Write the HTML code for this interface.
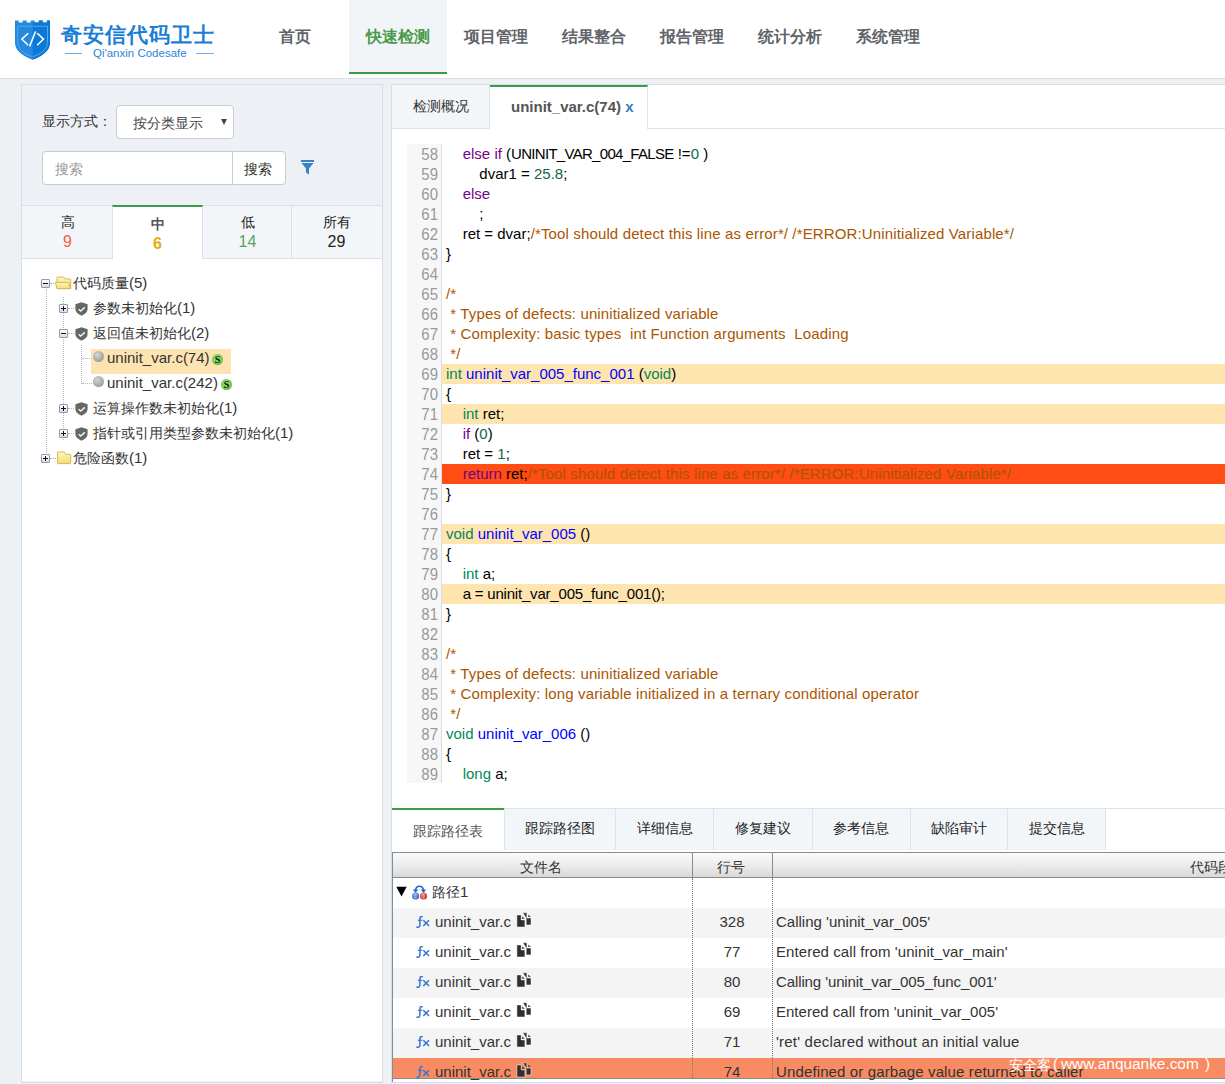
<!DOCTYPE html>
<html><head><meta charset="utf-8">
<style>
*{margin:0;padding:0;box-sizing:border-box}
html,body{width:1225px;height:1084px;overflow:hidden;background:#edf1f4;font-family:"Liberation Sans",sans-serif;color:#333}
.abs{position:absolute}
#hdr{position:absolute;left:0;top:0;width:1225px;height:79px;background:#fff;border-bottom:1px solid #d8dee5}
.nav{position:absolute;top:0;height:74px;font-size:16px;line-height:74px;color:#5f646a;white-space:nowrap;font-weight:bold}
.nav.act{background:#f1f5f8;color:#4a9a4a;border-bottom:2px solid #3d9a47;height:74px}
#left{position:absolute;left:21px;top:84px;width:362px;height:999px;border:1px solid #d6dee7;background:#edf1f5}
#right{position:absolute;left:391px;top:84px;width:834px;height:999px;border:1px solid #d6dee7;border-right:none;background:#fff}
.sev{position:absolute;width:91px;text-align:center;font-size:14px;line-height:19px;color:#1a1a1a}
.sev span{font-size:16px}
.tb{position:absolute;width:9px;height:9px;border:1px solid #8c9cb4;background:linear-gradient(#fff,#dcdcdc);border-radius:1px}
.tb .h{position:absolute;left:1px;top:3px;width:5px;height:1px;background:#111}
.tb .v{position:absolute;left:3px;top:1px;width:1px;height:5px;background:#111}
.dv{position:absolute;width:1px;border-left:1px dotted #b4b4b4}
.dh{position:absolute;height:1px;border-top:1px dotted #b4b4b4}
.gc{position:absolute;width:11px;height:11px;border-radius:50%;background:radial-gradient(circle at 40% 35%,#d4d4d4,#999 80%)}
.si{position:absolute;width:11px;height:11px;border-radius:50%;background:radial-gradient(circle at 45% 40%,#a6e88a,#62c23e 70%,#3f9e2a 100%);font:bold 10px/11px "Liberation Serif",serif;color:#111;text-align:center}
.tt{position:absolute;font-size:14px;line-height:18px;color:#333;white-space:nowrap}
.tt .e{font-size:15px}
.lnum{position:absolute;width:31px;text-align:right;font-size:15px;line-height:20px;color:#999;transform:translateY(0.6px) scaleY(1.1);transform-origin:50% 60%}
.code{position:absolute;font-size:15px;line-height:20px;color:#000;white-space:pre}
.code b{font-weight:normal}
.c{letter-spacing:0.14px}.k{color:#770088}.t{color:#008855}.f{color:#0000ff}.n{color:#116644}.c{color:#aa5500}
.rt{position:absolute;font-size:15px;line-height:18px;color:#333;white-space:nowrap}
.fx{position:absolute;font:italic 14px/18px "Liberation Serif",serif;color:#3f6fc9;white-space:nowrap}
.wm{position:absolute;line-height:18px;color:#fff;white-space:nowrap}
</style></head><body>
<div id="hdr">
<svg class="abs" style="left:15px;top:20px" width="36" height="41" viewBox="0 0 36 41">
<path d="M0 0.5 H3.6 V2.6 H7.7 V0.5 H11.6 V2.6 H15.8 V0.5 H19.7 V2.6 H23.8 V0.5 H27.8 V2.6 H31.9 V0.5 H35 V22.7 Q35 33 17.5 39.8 Q0 33 0 22.7 Z" fill="#238ae0"/>
<path d="M17.8 2.6 H23.8 V0.5 H27.8 V2.6 H31.9 V0.5 H35 V22.7 Q35 33 17.8 39.7 Z" fill="#0b79d8"/>
<path d="M2.7 6.2 H32.5 V22.5 Q32.5 31.5 17.5 37 Q2.7 31.5 2.7 22.5 Z" fill="none" stroke="#5aa6ea" stroke-width="1"/>
<path d="M13.2 13.2 L6.8 19.1 L13.2 25.2 M22.2 13.2 L28.5 19.1 L22.2 25.2 M20.6 11.4 L14.6 26.4" fill="none" stroke="#fff" stroke-width="1.5"/>
</svg>
<div class="abs" style="left:61px;top:21px;font-size:21px;line-height:28px;font-weight:bold;color:#1b7ed6;letter-spacing:1px;white-space:nowrap">奇安信代码卫士</div>
<div class="abs" style="left:65px;top:53px;width:17px;height:1px;background:#6aaee8"></div>
<div class="abs" style="left:196px;top:53px;width:18px;height:1px;background:#6aaee8"></div>
<div class="abs" style="left:93px;top:46px;font-size:11.5px;line-height:14px;color:#2a86d8;white-space:nowrap">Qi'anxin Codesafe</div>
<div class="nav" style="left:279px">首页</div>
<div class="nav act" style="left:349px;width:98px;padding-left:17px">快速检测</div>
<div class="nav" style="left:464px">项目管理</div>
<div class="nav" style="left:562px">结果整合</div>
<div class="nav" style="left:660px">报告管理</div>
<div class="nav" style="left:758px">统计分析</div>
<div class="nav" style="left:856px">系统管理</div>
</div>
<div id="left">
<div class="abs" style="left:20px;top:28px;font-size:14px;line-height:16px;color:#333;white-space:nowrap">显示方式：</div>
<div class="abs" style="left:94px;top:20px;width:118px;height:34px;background:#fff;border:1px solid #c8ccd0;border-radius:4px"></div>
<div class="abs" style="left:111px;top:30px;font-size:14px;line-height:16px;color:#444;white-space:nowrap">按分类显示</div>
<div class="abs" style="left:199px;top:34px;width:0;height:0;border-left:3.5px solid transparent;border-right:3.5px solid transparent;border-top:6px solid #444"></div>
<div class="abs" style="left:20px;top:66px;width:191px;height:34px;background:#fff;border:1px solid #c8ccd0;border-radius:4px 0 0 4px"></div>
<div class="abs" style="left:33px;top:76px;font-size:14px;line-height:16px;color:#999;white-space:nowrap">搜索</div>
<div class="abs" style="left:210px;top:66px;width:54px;height:34px;background:#fff;border:1px solid #c8ccd0;border-radius:0 4px 4px 0"></div>
<div class="abs" style="left:222px;top:76px;font-size:14px;line-height:16px;color:#333;white-space:nowrap">搜索</div>
<svg class="abs" style="left:279px;top:75px" width="13" height="15" viewBox="0 0 13 15"><path d="M0 0 H13 V2 H0 Z M0.5 3 H12.5 L8 8.5 V14.5 L5 12.5 V8.5 Z" fill="#3b80c3"/></svg>
<div class="abs" style="left:0;top:120px;width:360px;height:54px;background:#f2f6f9;border-top:1px solid #d9e1e9;border-bottom:1px solid #d9e1e9"></div>
<div class="abs" style="left:90px;top:120px;width:1px;height:54px;background:#dbe3ea"></div>
<div class="abs" style="left:180px;top:120px;width:1px;height:54px;background:#dbe3ea"></div>
<div class="abs" style="left:269px;top:120px;width:1px;height:54px;background:#dbe3ea"></div>
<div class="abs" style="left:90px;top:120px;width:91px;height:55px;background:#fff;border-top:2px solid #3e9a48;border-left:1px solid #dbe3ea;border-right:1px solid #dbe3ea"></div>
<div class="abs" style="left:0;top:174px;width:360px;height:822px;background:#fff"></div>
<div class="abs" style="left:69px;top:264px;width:140px;height:25px;background:#fde3b2"></div>
<div class="dv" style="left:24px;top:204px;height:166px"></div>
<div class="dv" style="left:41px;top:212px;height:143px"></div>
<div class="dv" style="left:59px;top:260px;height:39px"></div>
<div class="dh" style="left:28px;top:198px;width:6px"></div>
<div class="dh" style="left:28px;top:373px;width:6px"></div>
<div class="dh" style="left:46px;top:223px;width:6px"></div>
<div class="dh" style="left:46px;top:248px;width:6px"></div>
<div class="dh" style="left:46px;top:323px;width:6px"></div>
<div class="dh" style="left:46px;top:348px;width:6px"></div>
<div class="dh" style="left:60px;top:273px;width:10px"></div>
<div class="dh" style="left:60px;top:298px;width:10px"></div>
<div class="tb" style="left:19px;top:194px"><i class="h"></i></div>
<div class="tb" style="left:37px;top:219px"><i class="h"></i><i class="v"></i></div>
<div class="tb" style="left:37px;top:244px"><i class="h"></i></div>
<div class="tb" style="left:37px;top:319px"><i class="h"></i><i class="v"></i></div>
<div class="tb" style="left:37px;top:344px"><i class="h"></i><i class="v"></i></div>
<div class="tb" style="left:19px;top:369px"><i class="h"></i><i class="v"></i></div>
<svg class="abs" style="left:33px;top:191px" width="17" height="14" viewBox="0 0 17 14"><defs><linearGradient id="fy" x1="0" y1="0" x2="0" y2="1"><stop offset="0" stop-color="#fdf8b8"/><stop offset="1" stop-color="#f2dc78"/></linearGradient></defs><path d="M2 12.6 V1.6 Q2 1 2.6 1 H8.6 L10.3 3 H15.1 Q15.7 3 15.7 3.6 V12.6 Z" fill="url(#fy)" stroke="#dcb654" stroke-width="1"/><path d="M0.3 6.4 H13.3 L15.7 12.6 H2.1 Z" fill="url(#fy)" stroke="#dcb654" stroke-width="1" stroke-linejoin="round"/></svg>
<svg class="abs" style="left:33px;top:366px" width="17" height="14" viewBox="0 0 17 14"><path d="M2.5 1.6 Q2.5 1 3.1 1 H9.1 L10.8 3.3 H15.1 Q15.7 3.3 15.7 3.9 V12 Q15.7 12.6 15.1 12.6 H3.1 Q2.5 12.6 2.5 12 Z" fill="url(#fy)" stroke="#dcb654" stroke-width="1"/></svg>
<svg class="abs" style="left:53px;top:217px" width="13" height="14" viewBox="0 0 13 14"><path d="M6.5 0.3 L12.6 2.2 V7 Q12.6 11 6.5 13.7 Q0.4 11 0.4 7 V2.2 Z" fill="#666"/><path d="M3.6 7.2 L5.7 9 L9.8 5.4" fill="none" stroke="#f4f4f4" stroke-width="1.4"/></svg>
<svg class="abs" style="left:53px;top:242px" width="13" height="14" viewBox="0 0 13 14"><path d="M6.5 0.3 L12.6 2.2 V7 Q12.6 11 6.5 13.7 Q0.4 11 0.4 7 V2.2 Z" fill="#666"/><path d="M3.6 7.2 L5.7 9 L9.8 5.4" fill="none" stroke="#f4f4f4" stroke-width="1.4"/></svg>
<svg class="abs" style="left:53px;top:317px" width="13" height="14" viewBox="0 0 13 14"><path d="M6.5 0.3 L12.6 2.2 V7 Q12.6 11 6.5 13.7 Q0.4 11 0.4 7 V2.2 Z" fill="#666"/><path d="M3.6 7.2 L5.7 9 L9.8 5.4" fill="none" stroke="#f4f4f4" stroke-width="1.4"/></svg>
<svg class="abs" style="left:53px;top:342px" width="13" height="14" viewBox="0 0 13 14"><path d="M6.5 0.3 L12.6 2.2 V7 Q12.6 11 6.5 13.7 Q0.4 11 0.4 7 V2.2 Z" fill="#666"/><path d="M3.6 7.2 L5.7 9 L9.8 5.4" fill="none" stroke="#f4f4f4" stroke-width="1.4"/></svg>
<div class="gc" style="left:71px;top:266px"></div>
<div class="gc" style="left:71px;top:291px"></div>
<div class="si" style="left:190px;top:269px">S</div>
<div class="si" style="left:199px;top:294px">S</div>
<div class="tt" style="left:51px;top:189px">代码质量<span class="e">(5)</span></div>
<div class="tt" style="left:71px;top:214px">参数未初始化<span class="e">(1)</span></div>
<div class="tt" style="left:71px;top:239px">返回值未初始化<span class="e">(2)</span></div>
<div class="tt" style="left:85px;top:264px"><span class="e">uninit_var.c(74)</span></div>
<div class="tt" style="left:85px;top:289px"><span class="e">uninit_var.c(242)</span></div>
<div class="tt" style="left:71px;top:314px">运算操作数未初始化<span class="e">(1)</span></div>
<div class="tt" style="left:71px;top:339px">指针或引用类型参数未初始化<span class="e">(1)</span></div>
<div class="tt" style="left:51px;top:364px">危险函数<span class="e">(1)</span></div>
<div class="sev" style="left:0;top:128px">高<br><span style="color:#f2643a">9</span></div>
<div class="sev" style="left:90px;top:130px;color:#555;font-weight:bold">中<br><span style="color:#e9a81b;font-weight:bold">6</span></div>
<div class="sev" style="left:180px;top:128px">低<br><span style="color:#5da05a">14</span></div>
<div class="sev" style="left:269px;top:128px">所有<br><span style="color:#222">29</span></div>
</div>
<div id="right">
<div class="abs" style="left:0px;top:0px;width:833px;height:44px;border-bottom:1px solid #dde3e9"></div>
<div class="abs" style="left:0px;top:0px;width:98px;height:43px;background:#f2f6f9;border-right:1px solid #dde3e9"></div>
<div class="abs" style="left:98px;top:0px;width:158px;height:44px;background:#fff;border-top:2px solid #3e9a48;border-right:1px solid #dde3e9"></div>
<div class="abs" style="left:21px;top:12px;font-size:14px;line-height:18px;color:#333;white-space:nowrap">检测概况</div>
<div class="abs" style="left:119px;top:13px;font-size:15px;line-height:18px;font-weight:bold;color:#555;white-space:nowrap">uninit_var.c(74) <span style="color:#3a7cbf">x</span></div>
<div class="abs" style="left:15px;top:59px;width:35px;height:639px;background:#f7f7f7;border-right:1px solid #dcdcdc"></div>
<div class="lnum" style="left:15px;top:59px">58</div>
<div class="code" style="left:54px;top:59px">    <b class="k">else</b> <b class="k">if</b> (<b style="letter-spacing:-0.7px">UNINIT_VAR_004_FALSE</b> !=<b class="n">0</b> )</div>
<div class="lnum" style="left:15px;top:79px">59</div>
<div class="code" style="left:54px;top:79px">        dvar1 = <b class="n">25.8</b>;</div>
<div class="lnum" style="left:15px;top:99px">60</div>
<div class="code" style="left:54px;top:99px">    <b class="k">else</b></div>
<div class="lnum" style="left:15px;top:119px">61</div>
<div class="code" style="left:54px;top:119px">        ;</div>
<div class="lnum" style="left:15px;top:139px">62</div>
<div class="code" style="left:54px;top:139px">    ret = dvar;<b class="c">/*Tool should detect this line as error*/</b> <b class="c">/*ERROR:Uninitialized Variable*/</b></div>
<div class="lnum" style="left:15px;top:159px">63</div>
<div class="code" style="left:54px;top:159px">}</div>
<div class="lnum" style="left:15px;top:179px">64</div>
<div class="code" style="left:54px;top:179px"></div>
<div class="lnum" style="left:15px;top:199px">65</div>
<div class="code" style="left:54px;top:199px"><b class="c">/*</b></div>
<div class="lnum" style="left:15px;top:219px">66</div>
<div class="code" style="left:54px;top:219px"><b class="c"> * Types of defects: uninitialized variable</b></div>
<div class="lnum" style="left:15px;top:239px">67</div>
<div class="code" style="left:54px;top:239px"><b class="c"> * Complexity: basic types  int Function arguments  Loading</b></div>
<div class="lnum" style="left:15px;top:259px">68</div>
<div class="code" style="left:54px;top:259px"><b class="c"> */</b></div>
<div class="abs" style="left:50px;top:279px;width:783px;height:20px;background:#fee5b0"></div>
<div class="lnum" style="left:15px;top:279px">69</div>
<div class="code" style="left:54px;top:279px"><b class="t">int</b> <b class="f">uninit_var_005_func_001</b> (<b class="t">void</b>)</div>
<div class="lnum" style="left:15px;top:299px">70</div>
<div class="code" style="left:54px;top:299px">{</div>
<div class="abs" style="left:50px;top:319px;width:783px;height:20px;background:#fee5b0"></div>
<div class="lnum" style="left:15px;top:319px">71</div>
<div class="code" style="left:54px;top:319px">    <b class="t">int</b> ret;</div>
<div class="lnum" style="left:15px;top:339px">72</div>
<div class="code" style="left:54px;top:339px">    <b class="k">if</b> (<b class="n">0</b>)</div>
<div class="lnum" style="left:15px;top:359px">73</div>
<div class="code" style="left:54px;top:359px">    ret = <b class="n">1</b>;</div>
<div class="abs" style="left:50px;top:379px;width:783px;height:20px;background:#ff4d14"></div>
<div class="lnum" style="left:15px;top:379px">74</div>
<div class="code" style="left:54px;top:379px">    <b class="k">return</b> ret;<b class="c">/*Tool should detect this line as error*/</b> <b class="c">/*ERROR:Uninitialized Variable*/</b></div>
<div class="lnum" style="left:15px;top:399px">75</div>
<div class="code" style="left:54px;top:399px">}</div>
<div class="lnum" style="left:15px;top:419px">76</div>
<div class="code" style="left:54px;top:419px"></div>
<div class="abs" style="left:50px;top:439px;width:783px;height:20px;background:#fee5b0"></div>
<div class="lnum" style="left:15px;top:439px">77</div>
<div class="code" style="left:54px;top:439px"><b class="t">void</b> <b class="f">uninit_var_005</b> ()</div>
<div class="lnum" style="left:15px;top:459px">78</div>
<div class="code" style="left:54px;top:459px">{</div>
<div class="lnum" style="left:15px;top:479px">79</div>
<div class="code" style="left:54px;top:479px">    <b class="t">int</b> a;</div>
<div class="abs" style="left:50px;top:499px;width:783px;height:20px;background:#fee5b0"></div>
<div class="lnum" style="left:15px;top:499px">80</div>
<div class="code" style="left:54px;top:499px">    <b style="letter-spacing:-0.2px">a = uninit_var_005_func_001();</b></div>
<div class="lnum" style="left:15px;top:519px">81</div>
<div class="code" style="left:54px;top:519px">}</div>
<div class="lnum" style="left:15px;top:539px">82</div>
<div class="code" style="left:54px;top:539px"></div>
<div class="lnum" style="left:15px;top:559px">83</div>
<div class="code" style="left:54px;top:559px"><b class="c">/*</b></div>
<div class="lnum" style="left:15px;top:579px">84</div>
<div class="code" style="left:54px;top:579px"><b class="c"> * Types of defects: uninitialized variable</b></div>
<div class="lnum" style="left:15px;top:599px">85</div>
<div class="code" style="left:54px;top:599px"><b class="c"> * Complexity: long variable initialized in a ternary conditional operator</b></div>
<div class="lnum" style="left:15px;top:619px">86</div>
<div class="code" style="left:54px;top:619px"><b class="c"> */</b></div>
<div class="lnum" style="left:15px;top:639px">87</div>
<div class="code" style="left:54px;top:639px"><b class="t">void</b> <b class="f">uninit_var_006</b> ()</div>
<div class="lnum" style="left:15px;top:659px">88</div>
<div class="code" style="left:54px;top:659px">{</div>
<div class="lnum" style="left:15px;top:679px">89</div>
<div class="code" style="left:54px;top:679px">    <b class="t">long</b> a;</div>
<div class="abs" style="left:0px;top:723px;width:713px;height:42px;background:#f2f6f9;border-top:1px solid #dde3e9"></div><div class="abs" style="left:713px;top:723px;width:120px;height:1px;background:#dde3e9"></div>
<div class="abs" style="left:0px;top:723px;width:112px;height:44px;background:#fff;border-top:2px solid #3e9a48"></div>
<div class="abs" style="left:112px;top:723px;width:1px;height:42px;background:#dde3e9"></div>
<div class="abs" style="left:223px;top:723px;width:1px;height:42px;background:#dde3e9"></div>
<div class="abs" style="left:321px;top:723px;width:1px;height:42px;background:#dde3e9"></div>
<div class="abs" style="left:420px;top:723px;width:1px;height:42px;background:#dde3e9"></div>
<div class="abs" style="left:518px;top:723px;width:1px;height:42px;background:#dde3e9"></div>
<div class="abs" style="left:615px;top:723px;width:1px;height:42px;background:#dde3e9"></div>
<div class="abs" style="left:713px;top:723px;width:1px;height:42px;background:#dde3e9"></div>
<div class="abs" style="left:21px;top:737px;font-size:14px;line-height:18px;color:#555;white-space:nowrap">跟踪路径表</div>
<div class="abs" style="left:133px;top:734px;font-size:14px;line-height:18px;color:#222;white-space:nowrap">跟踪路径图</div>
<div class="abs" style="left:245px;top:734px;font-size:14px;line-height:18px;color:#222;white-space:nowrap">详细信息</div>
<div class="abs" style="left:343px;top:734px;font-size:14px;line-height:18px;color:#222;white-space:nowrap">修复建议</div>
<div class="abs" style="left:441px;top:734px;font-size:14px;line-height:18px;color:#222;white-space:nowrap">参考信息</div>
<div class="abs" style="left:539px;top:734px;font-size:14px;line-height:18px;color:#222;white-space:nowrap">缺陷审计</div>
<div class="abs" style="left:637px;top:734px;font-size:14px;line-height:18px;color:#222;white-space:nowrap">提交信息</div>
<div class="abs" style="left:0px;top:767px;width:833px;height:230px;border-top:1px solid #8a8a8a;border-left:1px solid #8a8a8a"></div>
<div class="abs" style="left:1px;top:768px;width:832px;height:25px;background:linear-gradient(#fbfbfb,#e9e9e9 60%,#d9d9d9);border-bottom:1px solid #8a8a8a"></div>
<div class="abs" style="left:300px;top:768px;width:1px;height:25px;background:#8a8a8a"></div>
<div class="abs" style="left:300px;top:793px;width:1px;height:200px;border-left:1px dotted #777"></div>
<div class="abs" style="left:380px;top:768px;width:1px;height:25px;background:#8a8a8a"></div>
<div class="abs" style="left:380px;top:793px;width:1px;height:200px;border-left:1px dotted #777"></div>
<div class="abs" style="left:128px;top:773px;font-size:14px;line-height:18px;color:#333;white-space:nowrap">文件名</div>
<div class="abs" style="left:325px;top:773px;font-size:14px;line-height:18px;color:#333;white-space:nowrap">行号</div>
<div class="abs" style="left:798px;top:773px;font-size:14px;line-height:18px;color:#333;white-space:nowrap">代码段</div>
<div class="abs" style="left:1px;top:823px;width:832px;height:30px;background:#f4f4f4"></div>
<div class="abs" style="left:1px;top:853px;width:832px;height:30px;background:#fff"></div>
<div class="abs" style="left:1px;top:883px;width:832px;height:30px;background:#f4f4f4"></div>
<div class="abs" style="left:1px;top:913px;width:832px;height:30px;background:#fff"></div>
<div class="abs" style="left:1px;top:943px;width:832px;height:30px;background:#f4f4f4"></div>
<div class="abs" style="left:1px;top:973px;width:832px;height:20px;background:#f88b62"></div>
<div class="abs" style="left:300px;top:793px;width:1px;height:200px;border-left:1px dotted #777"></div>
<div class="abs" style="left:380px;top:793px;width:1px;height:200px;border-left:1px dotted #777"></div>
<div class="abs" style="left:1px;top:993px;width:832px;height:1px;background:#8a8a8a"></div>
<svg class="abs" style="left:4px;top:801px" width="11" height="11" viewBox="0 0 11 11"><path d="M0.3 0.8 H10.7 L5.5 10.5 Z" fill="#000"/></svg>
<svg class="abs" style="left:19px;top:799px" width="17" height="16" viewBox="0 0 17 16"><path d="M4.5 7 Q4.5 2.2 8.5 2.2 Q12.5 2.2 12.5 7" fill="none" stroke="#2166cc" stroke-width="1.6"/><path d="M1.8 5.6 L4.5 9 L7.2 5.6 Z M9.8 5.6 L12.5 9 L15.2 5.6 Z" fill="#2166cc"/><defs><radialGradient id="gb" cx="0.4" cy="0.35" r="0.7"><stop offset="0" stop-color="#8fb4f0"/><stop offset="1" stop-color="#2a5cc0"/></radialGradient><radialGradient id="gr" cx="0.4" cy="0.35" r="0.7"><stop offset="0" stop-color="#f09090"/><stop offset="1" stop-color="#c02828"/></radialGradient></defs><circle cx="4.6" cy="12" r="3.6" fill="url(#gb)"/><circle cx="12.5" cy="12" r="3.6" fill="url(#gr)"/><path d="M3.5 10.3 H5.7 M3.5 13.8 H5.7 M11.4 10.3 H13.6 M11.4 13.8 H13.6" stroke="#fff" stroke-width="0.7" opacity="0.8"/></svg>
<div class="abs" style="left:40px;top:798px;font-size:14px;line-height:18px;color:#333;white-space:nowrap">路径<span style="font-size:15px">1</span></div>
<svg class="abs" style="left:24px;top:831px" width="14" height="12" viewBox="0 0 14 12"><path d="M6.6 1.3 Q6 0.5 5.1 0.6 Q4.1 0.7 4 2.4 L3.9 9.3 Q3.8 11.2 2.2 11.3 Q1.1 11.4 0.5 10.6" fill="none" stroke="#3b74d6" stroke-width="1.5"/><path d="M1.8 4.3 H6.2" stroke="#3b74d6" stroke-width="1.2"/><path d="M7.3 4.3 L13 10 M13 4.3 L7.3 10" stroke="#3b74d6" stroke-width="1.6"/></svg>
<div class="rt" style="left:43px;top:828px">uninit_var.c</div>
<svg class="abs" style="left:124px;top:827px" width="16" height="16" viewBox="0 0 16 16"><path d="M6.8 0.8 H10.9 V6 H15 V12.9 H10.2 V6 Z" fill="#2f2f2f" stroke="#fff" stroke-width="0.5"/><path d="M12.2 2.7 L15 4.7 H12.2 Z" fill="#2f2f2f"/><path d="M0.9 2.9 H5.2 V7.9 H8.9 V15 H0.9 Z" fill="#2f2f2f" stroke="#fff" stroke-width="0.5"/><path d="M6.2 4.6 L8.9 6.8 H6.2 Z" fill="#2f2f2f"/></svg>
<div class="rt" style="left:300px;top:828px;width:80px;text-align:center">328</div>
<div class="rt" style="left:384px;top:828px;letter-spacing:0px">Calling 'uninit_var_005'</div>
<svg class="abs" style="left:24px;top:861px" width="14" height="12" viewBox="0 0 14 12"><path d="M6.6 1.3 Q6 0.5 5.1 0.6 Q4.1 0.7 4 2.4 L3.9 9.3 Q3.8 11.2 2.2 11.3 Q1.1 11.4 0.5 10.6" fill="none" stroke="#3b74d6" stroke-width="1.5"/><path d="M1.8 4.3 H6.2" stroke="#3b74d6" stroke-width="1.2"/><path d="M7.3 4.3 L13 10 M13 4.3 L7.3 10" stroke="#3b74d6" stroke-width="1.6"/></svg>
<div class="rt" style="left:43px;top:858px">uninit_var.c</div>
<svg class="abs" style="left:124px;top:857px" width="16" height="16" viewBox="0 0 16 16"><path d="M6.8 0.8 H10.9 V6 H15 V12.9 H10.2 V6 Z" fill="#2f2f2f" stroke="#fff" stroke-width="0.5"/><path d="M12.2 2.7 L15 4.7 H12.2 Z" fill="#2f2f2f"/><path d="M0.9 2.9 H5.2 V7.9 H8.9 V15 H0.9 Z" fill="#2f2f2f" stroke="#fff" stroke-width="0.5"/><path d="M6.2 4.6 L8.9 6.8 H6.2 Z" fill="#2f2f2f"/></svg>
<div class="rt" style="left:300px;top:858px;width:80px;text-align:center">77</div>
<div class="rt" style="left:384px;top:858px;letter-spacing:0.07px">Entered call from 'uninit_var_main'</div>
<svg class="abs" style="left:24px;top:891px" width="14" height="12" viewBox="0 0 14 12"><path d="M6.6 1.3 Q6 0.5 5.1 0.6 Q4.1 0.7 4 2.4 L3.9 9.3 Q3.8 11.2 2.2 11.3 Q1.1 11.4 0.5 10.6" fill="none" stroke="#3b74d6" stroke-width="1.5"/><path d="M1.8 4.3 H6.2" stroke="#3b74d6" stroke-width="1.2"/><path d="M7.3 4.3 L13 10 M13 4.3 L7.3 10" stroke="#3b74d6" stroke-width="1.6"/></svg>
<div class="rt" style="left:43px;top:888px">uninit_var.c</div>
<svg class="abs" style="left:124px;top:887px" width="16" height="16" viewBox="0 0 16 16"><path d="M6.8 0.8 H10.9 V6 H15 V12.9 H10.2 V6 Z" fill="#2f2f2f" stroke="#fff" stroke-width="0.5"/><path d="M12.2 2.7 L15 4.7 H12.2 Z" fill="#2f2f2f"/><path d="M0.9 2.9 H5.2 V7.9 H8.9 V15 H0.9 Z" fill="#2f2f2f" stroke="#fff" stroke-width="0.5"/><path d="M6.2 4.6 L8.9 6.8 H6.2 Z" fill="#2f2f2f"/></svg>
<div class="rt" style="left:300px;top:888px;width:80px;text-align:center">80</div>
<div class="rt" style="left:384px;top:888px;letter-spacing:-0.11px">Calling 'uninit_var_005_func_001'</div>
<svg class="abs" style="left:24px;top:921px" width="14" height="12" viewBox="0 0 14 12"><path d="M6.6 1.3 Q6 0.5 5.1 0.6 Q4.1 0.7 4 2.4 L3.9 9.3 Q3.8 11.2 2.2 11.3 Q1.1 11.4 0.5 10.6" fill="none" stroke="#3b74d6" stroke-width="1.5"/><path d="M1.8 4.3 H6.2" stroke="#3b74d6" stroke-width="1.2"/><path d="M7.3 4.3 L13 10 M13 4.3 L7.3 10" stroke="#3b74d6" stroke-width="1.6"/></svg>
<div class="rt" style="left:43px;top:918px">uninit_var.c</div>
<svg class="abs" style="left:124px;top:917px" width="16" height="16" viewBox="0 0 16 16"><path d="M6.8 0.8 H10.9 V6 H15 V12.9 H10.2 V6 Z" fill="#2f2f2f" stroke="#fff" stroke-width="0.5"/><path d="M12.2 2.7 L15 4.7 H12.2 Z" fill="#2f2f2f"/><path d="M0.9 2.9 H5.2 V7.9 H8.9 V15 H0.9 Z" fill="#2f2f2f" stroke="#fff" stroke-width="0.5"/><path d="M6.2 4.6 L8.9 6.8 H6.2 Z" fill="#2f2f2f"/></svg>
<div class="rt" style="left:300px;top:918px;width:80px;text-align:center">69</div>
<div class="rt" style="left:384px;top:918px;letter-spacing:0.01px">Entered call from 'uninit_var_005'</div>
<svg class="abs" style="left:24px;top:951px" width="14" height="12" viewBox="0 0 14 12"><path d="M6.6 1.3 Q6 0.5 5.1 0.6 Q4.1 0.7 4 2.4 L3.9 9.3 Q3.8 11.2 2.2 11.3 Q1.1 11.4 0.5 10.6" fill="none" stroke="#3b74d6" stroke-width="1.5"/><path d="M1.8 4.3 H6.2" stroke="#3b74d6" stroke-width="1.2"/><path d="M7.3 4.3 L13 10 M13 4.3 L7.3 10" stroke="#3b74d6" stroke-width="1.6"/></svg>
<div class="rt" style="left:43px;top:948px">uninit_var.c</div>
<svg class="abs" style="left:124px;top:947px" width="16" height="16" viewBox="0 0 16 16"><path d="M6.8 0.8 H10.9 V6 H15 V12.9 H10.2 V6 Z" fill="#2f2f2f" stroke="#fff" stroke-width="0.5"/><path d="M12.2 2.7 L15 4.7 H12.2 Z" fill="#2f2f2f"/><path d="M0.9 2.9 H5.2 V7.9 H8.9 V15 H0.9 Z" fill="#2f2f2f" stroke="#fff" stroke-width="0.5"/><path d="M6.2 4.6 L8.9 6.8 H6.2 Z" fill="#2f2f2f"/></svg>
<div class="rt" style="left:300px;top:948px;width:80px;text-align:center">71</div>
<div class="rt" style="left:384px;top:948px;letter-spacing:0.2px">'ret' declared without an initial value</div>
<svg class="abs" style="left:24px;top:981px" width="14" height="12" viewBox="0 0 14 12"><path d="M6.6 1.3 Q6 0.5 5.1 0.6 Q4.1 0.7 4 2.4 L3.9 9.3 Q3.8 11.2 2.2 11.3 Q1.1 11.4 0.5 10.6" fill="none" stroke="#3b74d6" stroke-width="1.5"/><path d="M1.8 4.3 H6.2" stroke="#3b74d6" stroke-width="1.2"/><path d="M7.3 4.3 L13 10 M13 4.3 L7.3 10" stroke="#3b74d6" stroke-width="1.6"/></svg>
<div class="rt" style="left:43px;top:978px">uninit_var.c</div>
<svg class="abs" style="left:124px;top:977px" width="16" height="16" viewBox="0 0 16 16"><path d="M6.8 0.8 H10.9 V6 H15 V12.9 H10.2 V6 Z" fill="#2f2f2f" stroke="#fff" stroke-width="0.5"/><path d="M12.2 2.7 L15 4.7 H12.2 Z" fill="#2f2f2f"/><path d="M0.9 2.9 H5.2 V7.9 H8.9 V15 H0.9 Z" fill="#2f2f2f" stroke="#fff" stroke-width="0.5"/><path d="M6.2 4.6 L8.9 6.8 H6.2 Z" fill="#2f2f2f"/></svg>
<div class="rt" style="left:300px;top:978px;width:80px;text-align:center">74</div>
<div class="rt" style="left:384px;top:978px;letter-spacing:0.13px">Undefined or garbage value returned to caller</div>
<div class="wm" style="left:617px;top:971px;font-size:14px">安全客</div><div class="wm" style="left:661px;top:970px;font-size:15px">(</div><div class="wm" style="left:669px;top:970px;font-size:15.4px">www.anquanke.com</div><div class="wm" style="left:813px;top:970px;font-size:15px">)</div>
</div>
</body></html>
